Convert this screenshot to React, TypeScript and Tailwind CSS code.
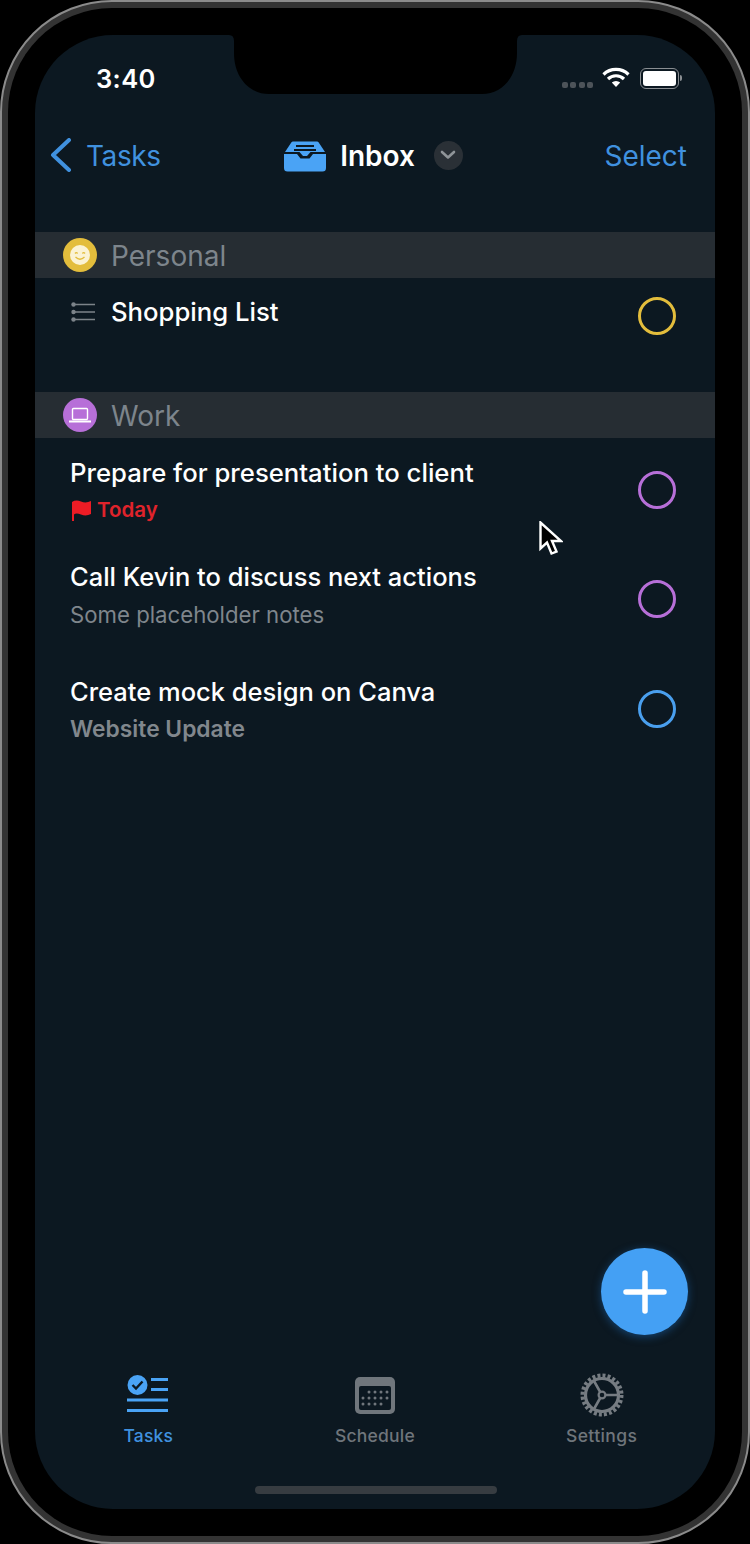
import React from "react";

type Task = {
  title: string;
  titleSize: string;
  note?: string;
  noteStyle?: string;
  ring: string;
  height: string;
  gap: string;
  shift: string;
  today?: boolean;
};

const tasks: Task[] = [
  {
    title: "Prepare for presentation to client",
    titleSize: "text-[25.7px]",
    ring: "border-[#b76fd8]",
    height: "h-[104px]",
    gap: "gap-[14px]",
    shift: "mt-[1px]",
    today: true,
  },
  {
    title: "Call Kevin to discuss next actions",
    titleSize: "text-[25.5px]",
    note: "Some placeholder notes",
    noteStyle: "text-[22.2px] font-normal text-[#7f868c]",
    ring: "border-[#b76fd8]",
    height: "h-[114px]",
    gap: "gap-[15px]",
    shift: "-mt-[8px]",
  },
  {
    title: "Create mock design on Canva",
    titleSize: "text-[25.5px]",
    note: "Website Update",
    noteStyle: "text-[22.8px] font-semibold text-[#81878d]",
    ring: "border-[#4a9fee]",
    height: "h-[106px]",
    gap: "gap-[14px]",
    shift: "mt-[1px]",
  },
];

const InboxIcon = () => (
  <svg width="42" height="32" viewBox="0 0 42 32">
    <path d="M9 1.500h24a2 2 0 0 1 1.700 1L41 12H29.500l-3 0-3.500 4h-4l-3.500-4H1l6.300-9.500a2 2 0 0 1 1.700-1z" fill="#4aa3f5" />
    <path d="M12 6h18M10 10h22" stroke="#0c1821" strokeWidth="2" />
    <path d="M0 14h13l3.500 4.500h9L29 14h13v14a3.500 3.500 0 0 1-3.500 3.500h-35A3.500 3.500 0 0 1 0 28z" fill="#4aa3f5" />
  </svg>
);

const TasksTabIcon = () => (
  <svg width="42" height="38" viewBox="0 0 42 38" className="-mt-[3px]">
    <circle cx="10.500" cy="10" r="10" fill="#4aa3f5" />
    <path d="M5.500 10l3.500 3.500 6.500-7" fill="none" stroke="#0c1821" strokeWidth="2.400" />
    <path d="M24 4.500h17M24 14.500h17M0 25h41M0 35.500h41" stroke="#4aa3f5" strokeWidth="3" />
  </svg>
);

const ScheduleIcon = () => (
  <svg width="40" height="37" viewBox="0 0 40 37">
    <rect width="40" height="37" rx="5" fill="#70767c" />
    <rect x="4" y="9" width="32" height="24" rx="2" fill="#0c1821" />
    <g fill="#70767c">
      {[15, 21, 27, 33].map((x) => <circle key={x} cx={x - 1} cy="15" r="1.500" />)}
      {[9, 15, 21, 27, 33].map((x) => <circle key={x} cx={x - 1} cy="21" r="1.500" />)}
      {[9, 15, 21, 27].map((x) => <circle key={x} cx={x - 1} cy="27" r="1.500" />)}
    </g>
  </svg>
);

const GearIcon = () => (
  <svg width="44" height="44" viewBox="0 0 44 44" fill="none" stroke="#767c82">
    <circle cx="22" cy="22" r="19.500" strokeWidth="4" strokeDasharray="3 2.100" />
    <circle cx="22" cy="22" r="16.500" strokeWidth="3.200" />
    <circle cx="22" cy="22" r="3.400" strokeWidth="2.200" />
    <path d="M25.500 22H38M20.200 25l-6.200 11M20.200 19l-6.200-11" strokeWidth="2.600" />
  </svg>
);

const App: React.FC = () => {
  return (
    <div className="w-[750px] h-[1544px] bg-black font-['Inter',sans-serif]">
      <div className="relative w-full h-full rounded-[112px] border-2 border-[#8b8b8b] bg-[#333333] p-[6px]">
        <div className="w-full h-full rounded-[104px] bg-black p-[27px]">
          {/* Screen */}
          <div className="relative flex flex-col w-full h-full overflow-hidden rounded-[78px] bg-[#0c1821]">
            {/* Notch */}
            <svg width="293" height="59" viewBox="0 0 293 59" className="absolute left-[194px] top-0">
              <path
                d="M0 0Q5 0 5 6V18C5 42 20 59 40 59H253C273 59 288 42 288 18V6Q288 0 293 0z"
                fill="#000"
              />
            </svg>

            {/* Status bar */}
            <div className="flex items-center justify-between h-[85px] shrink-0 pl-[61px] pr-[33px] pt-[2px] text-white">
              <span className="text-[25.5px] font-semibold leading-none tracking-[0.4px]">3:40</span>
              <div className="flex items-center">
                <div className="flex gap-[2.5px] mt-[13px] mr-[9px]">
                  <span className="w-[6px] h-[6px] rounded-[2px] bg-[#4d5359]"></span>
                  <span className="w-[6px] h-[6px] rounded-[2px] bg-[#4d5359]"></span>
                  <span className="w-[6px] h-[6px] rounded-[2px] bg-[#4d5359]"></span>
                  <span className="w-[6px] h-[6px] rounded-[2px] bg-[#4d5359]"></span>
                </div>
                <svg width="28" height="22" viewBox="0 0 28 22" fill="none" stroke="#fff" strokeWidth="3.200" className="mr-[10px] -mt-[3px]">
                  <path d="M1.500 8.500a18 18 0 0 1 25 0M6 13a11.500 11.500 0 0 1 16 0" />
                  <path d="M14 21l-4.200-4.400a6 6 0 0 1 8.400 0z" fill="#fff" stroke="none" />
                </svg>
                <div className="flex items-center -mt-[1px]">
                  <div className="w-[39px] h-[21px] rounded-[6px] border border-[#8a8e92] p-[2px]">
                    <div className="w-full h-full rounded-[3px] bg-white"></div>
                  </div>
                  <span className="ml-[1px] w-[2px] h-[6px] rounded-r-sm bg-[#8a8e92]"></span>
                </div>
              </div>
            </div>

            {/* Nav */}
            <div className="grid grid-cols-[1fr_auto_1fr] items-center h-[72px] shrink-0 pl-[15px] pr-[28px]">
              <div className="flex items-center text-[28px] leading-none tracking-[-0.4px] text-[#4091df]">
                <svg width="22" height="34" viewBox="0 0 22 34" fill="none" stroke="#4091df" strokeWidth="4" strokeLinecap="round" strokeLinejoin="round" className="-mt-[2px]">
                  <path d="M19 2L3 17l16 15" />
                </svg>
                <span className="ml-[14px]">Tasks</span>
              </div>
              <div className="flex items-center ml-[10px]">
                <InboxIcon />
                <span className="ml-[14px] text-[28px] leading-none font-semibold text-white">Inbox</span>
                <div className="flex items-center justify-center ml-[19px] w-[29px] h-[29px] rounded-full bg-[#2a3036] -mt-[2px]">
                  <svg width="16" height="10" viewBox="0 0 16 10" fill="none" stroke="#8f9498" strokeWidth="2.600" strokeLinecap="round" strokeLinejoin="round">
                    <path d="M2 2l6 5.500L14 2" />
                  </svg>
                </div>
              </div>
              <span className="justify-self-end text-[28px] leading-none text-[#4091df]">Select</span>
            </div>

            {/* List */}
            <div className="flex-1 pt-[40px]">
              <div className="flex items-center h-[46px] pl-[28px] bg-[#262d33]">
                <div className="flex items-center justify-center w-[34px] h-[34px] rounded-full bg-[#e3bd3c]">
                  <svg width="20" height="20" viewBox="0 0 20 20">
                    <circle cx="10" cy="10" r="10" fill="#fbf3d4" />
                    <path d="M5 8.500q1.300-1.800 2.600 0M12.400 8.500q1.300-1.800 2.600 0M5.500 12q4.500 4.500 9 0" fill="none" stroke="#e3bd3c" strokeWidth="1.300" />
                  </svg>
                </div>
                <span className="ml-[14px] pt-[2px] text-[28px] leading-none text-[#7d858c]">Personal</span>
              </div>

              <div className="flex justify-between h-[114px] pl-[36px] pr-[39px]">
                <div className="flex items-center h-[68px]">
                  <svg width="24" height="20" viewBox="0 0 24 20" stroke="#7c8389" fill="#7c8389">
                    <path d="M3 2.500h21M3 10h21M3 17.500h21" strokeWidth="1.700" />
                    <circle cx="2.500" cy="2.500" r="2.200" stroke="none" />
                    <circle cx="2.500" cy="10" r="2.200" stroke="none" />
                    <circle cx="2.500" cy="17.500" r="2.200" stroke="none" />
                  </svg>
                  <span className="ml-[16px] text-[25.7px] leading-none font-[450] text-white">Shopping List</span>
                </div>
                <div className="mt-[19px] w-[38px] h-[38px] rounded-full border-[3px] border-[#e3bd3c]"></div>
              </div>

              <div className="flex items-center h-[46px] pl-[28px] bg-[#262d33]">
                <div className="flex items-center justify-center w-[34px] h-[34px] rounded-full bg-[#b76fd8]">
                  <svg width="22" height="16" viewBox="0 0 22 16" fill="none" stroke="#fff">
                    <rect x="3.500" y="1.500" width="15" height="11" rx="1" strokeWidth="1.400" />
                    <path d="M0 14.500h22" strokeWidth="2" />
                  </svg>
                </div>
                <span className="ml-[14px] pt-[2px] text-[28px] leading-none text-[#7d858c]">Work</span>
              </div>

              {tasks.map((task) => (
                <div key={task.title} className={`flex items-center justify-between pl-[35px] pr-[39px] ${task.height}`}>
                  <div className={`flex flex-col ${task.gap} ${task.shift}`}>
                    <span className={`leading-[25px] font-[450] text-white ${task.titleSize}`}>{task.title}</span>
                    {task.today ? (
                      <div className="flex items-center h-[22px] pl-[1px]">
                        <svg width="21" height="22" viewBox="0 0 21 22" fill="#ee1c25">
                          <path d="M1 3q4-2.500 9 -.5t10-.5v13q-5 2.500-10 .5t-7 0v7H1z" />
                        </svg>
                        <span className="ml-[5px] text-[20.5px] leading-none font-semibold text-[#e0232b]">Today</span>
                      </div>
                    ) : (
                      <span className={`leading-[22px] ${task.noteStyle}`}>{task.note}</span>
                    )}
                  </div>
                  <div className={`w-[38px] h-[38px] rounded-full border-[3px] ${task.ring}`}></div>
                </div>
              ))}
            </div>

            {/* Tab bar */}
            <div className="grid grid-cols-3 shrink-0">
              <div className="flex flex-col items-center">
                <div className="flex items-center h-[44px]"><TasksTabIcon /></div>
                <span className="mt-[9px] text-[17.5px] leading-[20px] font-medium tracking-[0.2px] text-[#4091df]">Tasks</span>
              </div>
              <div className="flex flex-col items-center">
                <div className="flex items-center h-[44px]"><ScheduleIcon /></div>
                <span className="mt-[9px] text-[17.5px] leading-[20px] font-medium tracking-[0.2px] text-[#6f757b]">Schedule</span>
              </div>
              <div className="flex flex-col items-center">
                <div className="flex items-center h-[44px]"><GearIcon /></div>
                <span className="mt-[9px] text-[17.5px] leading-[20px] font-medium tracking-[0.4px] text-[#6f757b]">Settings</span>
              </div>
            </div>
            <div className="flex justify-center pt-[40px] pb-[15px] pl-[1px] shrink-0">
              <div className="w-[242px] h-[8px] rounded-full bg-[#373c41]"></div>
            </div>

            {/* Add button */}
            <div className="absolute right-[27px] bottom-[174px] flex items-center justify-center w-[87px] h-[87px] rounded-full bg-[#44a0f4] shadow-[0_2px_8px_rgba(30,110,190,0.5)]">
              <svg width="44" height="44" viewBox="0 0 44 44" stroke="#fff" strokeWidth="5.500" strokeLinecap="round">
                <path d="M22 3v38M3 22h38" />
              </svg>
            </div>

            {/* Cursor */}
            <svg width="24" height="36" viewBox="0 0 24 36" className="absolute left-[504px] top-[486px]">
              <path d="M1.500 1.500v26l6.500-6 4.500 11 5-2-4.500-10.500h9z" fill="#000" stroke="#fff" strokeWidth="2.400" />
            </svg>
          </div>
        </div>
      </div>
    </div>
  );
};

export default App;
